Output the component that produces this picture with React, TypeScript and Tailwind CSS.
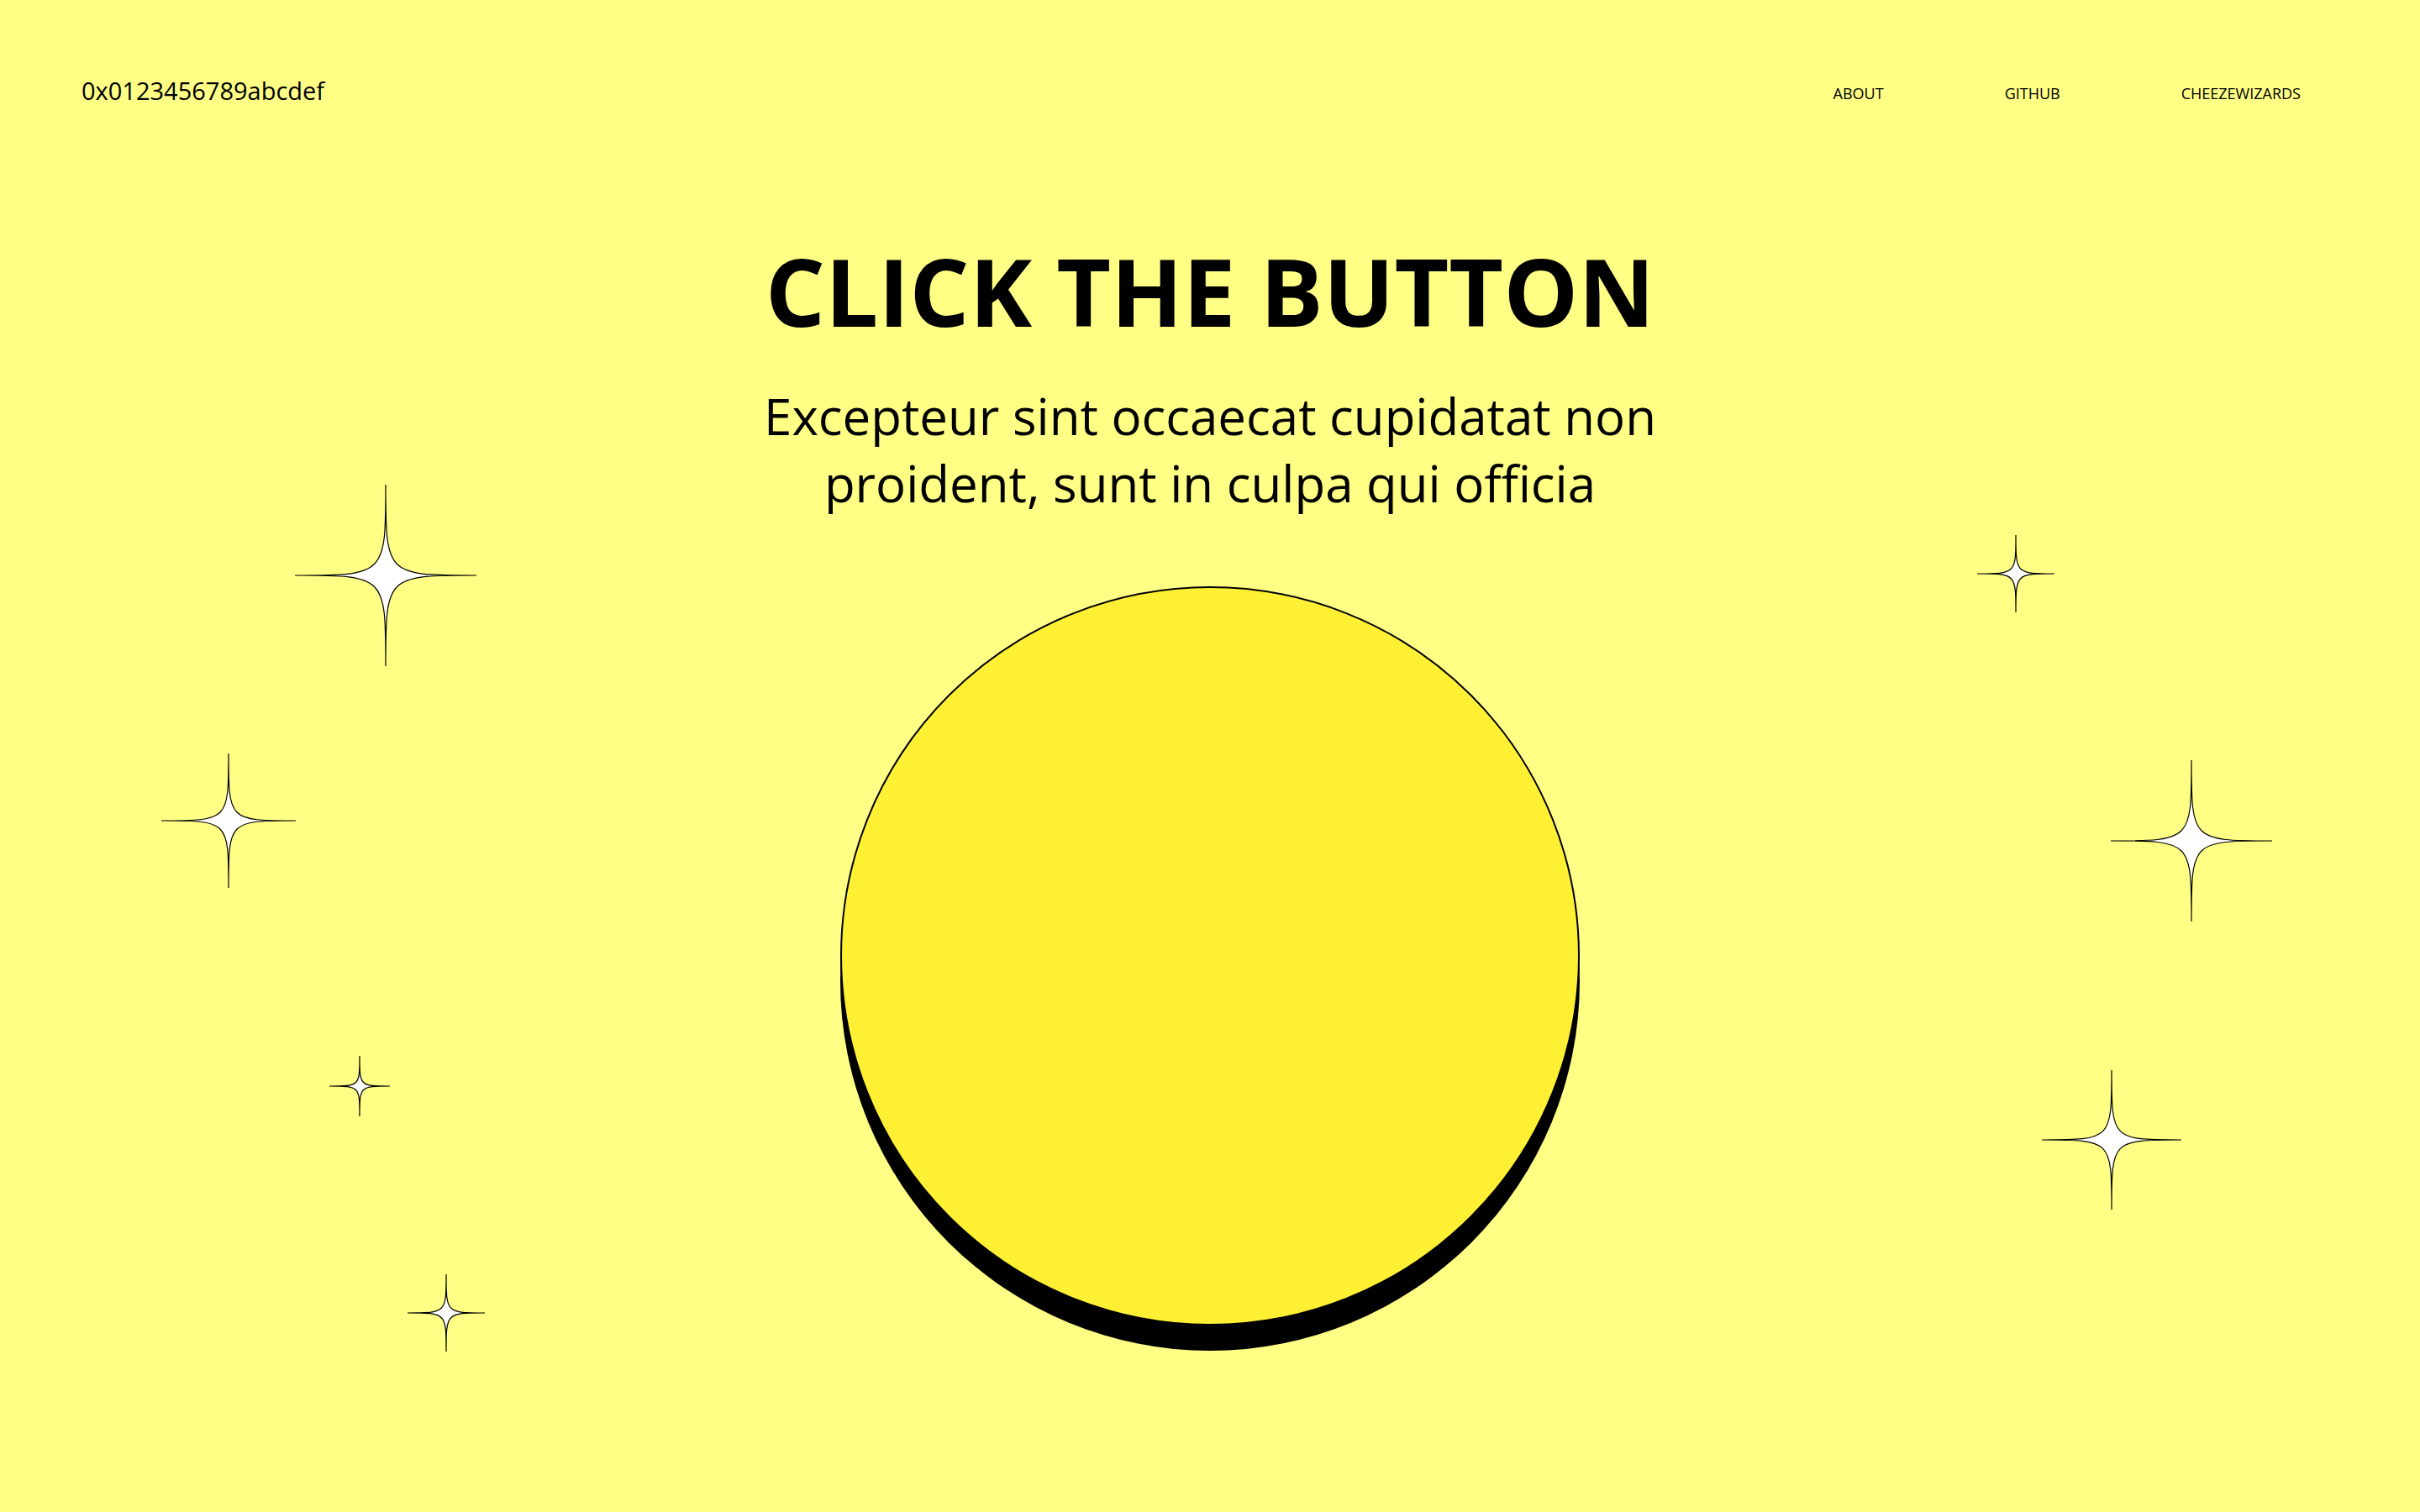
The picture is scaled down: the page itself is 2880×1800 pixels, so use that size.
export default function App() {
  const nav = ['ABOUT', 'GITHUB', 'CHEEZEWIZARDS'];

  // decorative sparkles scattered around the button
  const sparkles = [
    'left-[351px] top-[577px] w-[216px] h-[216px]',
    'left-[192px] top-[897px] w-[160px] h-[160px]',
    'left-[392px] top-[1257px] w-[72px] h-[72px]',
    'left-[485px] top-[1517px] w-[92px] h-[92px]',
    'left-[2353px] top-[637px] w-[92px] h-[92px]',
    'left-[2512px] top-[905px] w-[192px] h-[192px]',
    'left-[2430px] top-[1274px] w-[166px] h-[166px]',
  ];

  return (
    <div className="relative min-h-screen overflow-hidden bg-[#ffff85] text-black font-['Open_Sans',sans-serif]">
      {/* Header */}
      <header className="flex items-start justify-between pl-[97px] pr-[142px] pt-[93px]">
        <span className="text-[29px] leading-none">0x0123456789abcdef</span>
        <nav className="flex gap-[144px] pt-[9px] text-[18px] leading-none">
          {nav.map((item) => (
            <a key={item} href="#" className="hover:underline">
              {item}
            </a>
          ))}
        </nav>
      </header>

      {/* Hero */}
      <main className="flex flex-col items-center pb-[160px]">
        <h1 className="mt-[168px] text-[112px] font-bold leading-none">CLICK THE BUTTON</h1>
        <p className="mt-[53px] max-w-[1100px] text-center text-[60px] leading-[80px]">
          Excepteur sint occaecat cupidatat non proident, sunt in culpa qui officia
        </p>
        <button
          type="button"
          aria-label="Click the button"
          className="mt-[83px] h-[880px] w-[880px] rounded-full border-2 border-black bg-[#fff033] shadow-[0_30px_0_0_#000] active:translate-y-[14px] active:shadow-[0_16px_0_0_#000] transition-transform"
        />
      </main>

      {sparkles.map((cls, idx) => (
        <svg key={idx} viewBox="0 0 100 100" className={`absolute ${cls}`}>
          <path
            d="M50 0 C50 50 50 50 100 50 C50 50 50 50 50 100 C50 50 50 50 0 50 C50 50 50 50 50 0 Z"
            fill="#fff"
            stroke="#000"
            strokeWidth={1.2}
            vectorEffect="non-scaling-stroke"
            strokeLinejoin="round"
          />
        </svg>
      ))}
    </div>
  );
}
